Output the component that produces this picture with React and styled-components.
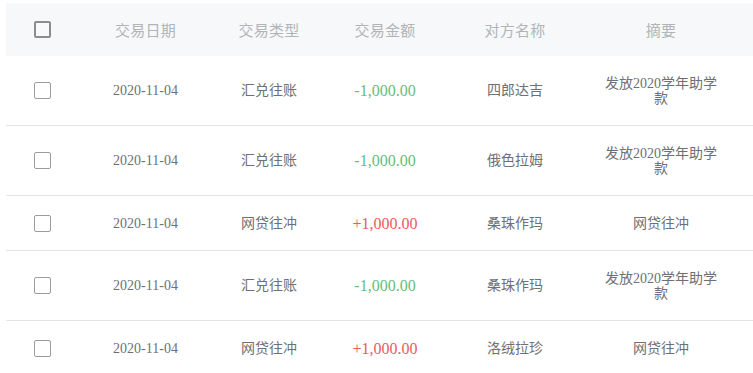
import React from "react";
import styled, { createGlobalStyle } from "styled-components";

const Global = createGlobalStyle`
  html, body { margin: 0; padding: 0; background: #ffffff; }
  body { font-family: "Liberation Serif", "Noto Sans CJK SC", serif; }
  * { box-sizing: border-box; }
`;

const Table = styled.div`
  padding: 3px 0 0 6px;
  width: 100%;
  overflow: hidden;
`;

const cols = "73px 133px 114px 118px 142px 150px";

const HeaderRow = styled.div`
  display: grid;
  grid-template-columns: ${cols};
  align-items: center;
  height: 53px;
  background: #f6f8fa;
`;

const Row = styled.div`
  display: grid;
  grid-template-columns: ${cols};
  align-items: center;
  min-height: 55px;
  border-bottom: 1px solid #e2e4e8;
`;

const HeadCell = styled.div`
  text-align: center;
  font-size: 15px;
  color: #b1b4b9;
  letter-spacing: 0.3px;
`;

const Cell = styled.div`
  display: flex;
  justify-content: center;
  align-items: center;
  text-align: center;
  font-size: ${(p) => (p.$big ? "16px" : "14px")};
  line-height: 15px;
  color: ${(p) => p.$color || "#6e7075"};
  padding: ${(p) => (p.$pad ? "19.5px 16px" : "0")};
`;

const Box = styled.span`
  display: inline-block;
  width: 17px;
  height: 17px;
  border-radius: 2px;
  border: ${(p) => (p.$head ? "2px solid #8c8c8c" : "1px solid #9c9c9c")};
  background: ${(p) => (p.$head ? "#f7f9fb" : "#ffffff")};
`;

const rows = [
  { date: "2020-11-04", type: "汇兑往账", amount: "-1,000.00", name: "四郎达吉", memo: "发放2020学年助学款" },
  { date: "2020-11-04", type: "汇兑往账", amount: "-1,000.00", name: "俄色拉姆", memo: "发放2020学年助学款" },
  { date: "2020-11-04", type: "网贷往冲", amount: "+1,000.00", name: "桑珠作玛", memo: "网贷往冲" },
  { date: "2020-11-04", type: "汇兑往账", amount: "-1,000.00", name: "桑珠作玛", memo: "发放2020学年助学款" },
  { date: "2020-11-04", type: "网贷往冲", amount: "+1,000.00", name: "洛绒拉珍", memo: "网贷往冲" },
];

export default function App() {
  return (
    <>
      <Global />
      <Table>
        <HeaderRow>
          <Cell><Box $head /></Cell>
          <HeadCell>交易日期</HeadCell>
          <HeadCell>交易类型</HeadCell>
          <HeadCell>交易金额</HeadCell>
          <HeadCell>对方名称</HeadCell>
          <HeadCell>摘要</HeadCell>
        </HeaderRow>
        {rows.map((r, i) => (
          <Row key={i}>
            <Cell><Box /></Cell>
            <Cell>{r.date}</Cell>
            <Cell>{r.type}</Cell>
            <Cell $big $color={r.amount.startsWith("-") ? "#64be7c" : "#ec5a5e"}>{r.amount}</Cell>
            <Cell>{r.name}</Cell>
            <Cell $pad>{r.memo}</Cell>
          </Row>
        ))}
      </Table>
    </>
  );
}
